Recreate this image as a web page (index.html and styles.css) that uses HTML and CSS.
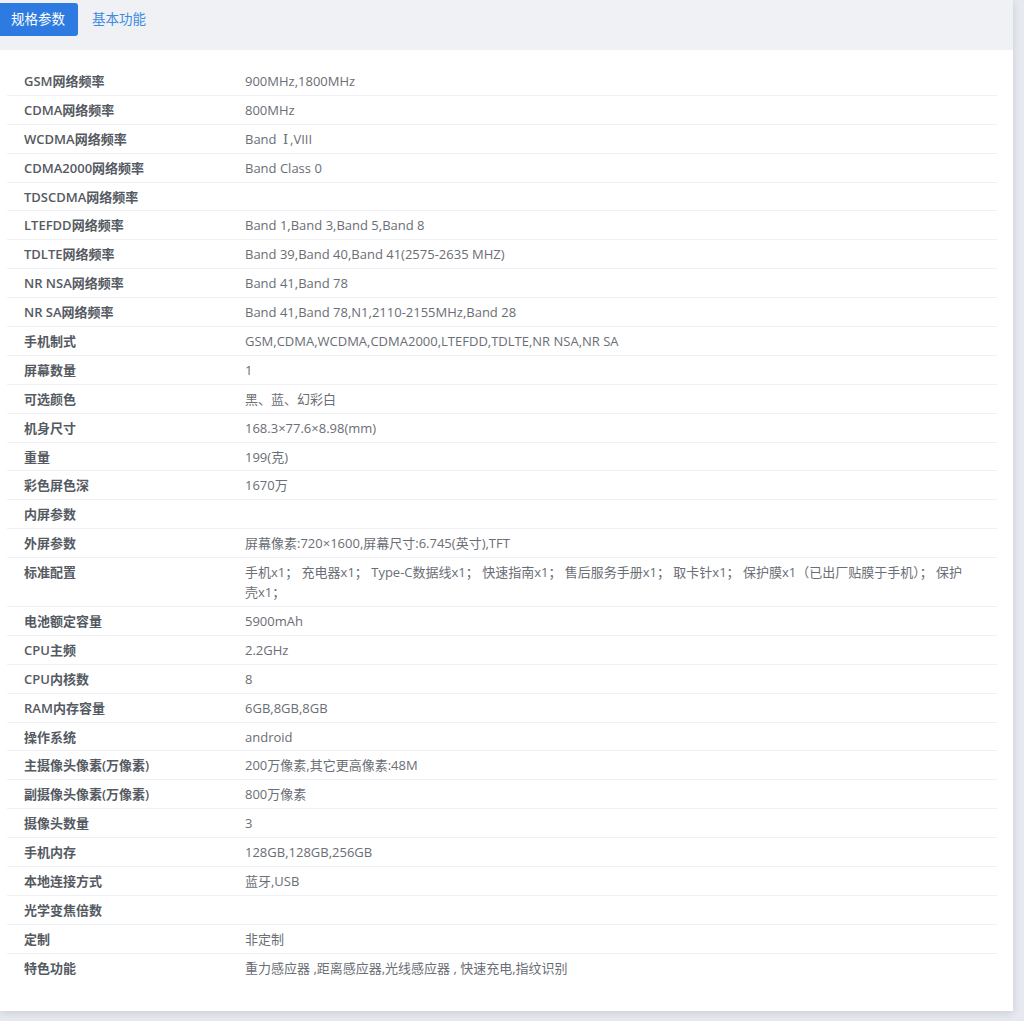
FILE: index.html
```html
<!DOCTYPE html>
<html lang="zh-CN">
<head>
<meta charset="utf-8">
<title>规格参数</title>
<link rel="stylesheet" href="styles.css">
</head>
<body>
<div class="card">
  <div class="tabs">
    <div class="tab active">规格参数</div>
    <div class="tab">基本功能</div>
  </div>
  <div class="content">
    <div class="spec">
      <div class="row"><div class="k">GSM网络频率</div><div class="v">900MHz,1800MHz</div></div>
      <div class="row"><div class="k">CDMA网络频率</div><div class="v">800MHz</div></div>
      <div class="row"><div class="k">WCDMA网络频率</div><div class="v">Band <span class="roman">Ⅰ</span>,VIII</div></div>
      <div class="row"><div class="k">CDMA2000网络频率</div><div class="v">Band Class 0</div></div>
      <div class="row"><div class="k">TDSCDMA网络频率</div><div class="v"></div></div>
      <div class="row"><div class="k">LTEFDD网络频率</div><div class="v">Band 1,Band 3,Band 5,Band 8</div></div>
      <div class="row"><div class="k">TDLTE网络频率</div><div class="v">Band 39,Band 40,Band 41(2575-2635 MHZ)</div></div>
      <div class="row"><div class="k">NR NSA网络频率</div><div class="v">Band 41,Band 78</div></div>
      <div class="row"><div class="k">NR SA网络频率</div><div class="v">Band 41,Band 78,N1,2110-2155MHz,Band 28</div></div>
      <div class="row"><div class="k">手机制式</div><div class="v">GSM,CDMA,WCDMA,CDMA2000,LTEFDD,TDLTE,NR NSA,NR SA</div></div>
      <div class="row"><div class="k">屏幕数量</div><div class="v">1</div></div>
      <div class="row"><div class="k">可选颜色</div><div class="v">黑、蓝、幻彩白</div></div>
      <div class="row"><div class="k">机身尺寸</div><div class="v">168.3×77.6×8.98(mm)</div></div>
      <div class="row"><div class="k">重量</div><div class="v">199(克)</div></div>
      <div class="row"><div class="k">彩色屏色深</div><div class="v">1670万</div></div>
      <div class="row"><div class="k">内屏参数</div><div class="v"></div></div>
      <div class="row"><div class="k">外屏参数</div><div class="v">屏幕像素:720×1600,屏幕尺寸:6.745(英寸),TFT</div></div>
      <div class="row"><div class="k">标准配置</div><div class="v">手机x1； 充电器x1； Type-C数据线x1； 快速指南x1； 售后服务手册x1； 取卡针x1； 保护膜x1（已出厂贴膜于手机）； 保护壳x1；</div></div>
      <div class="row"><div class="k">电池额定容量</div><div class="v">5900mAh</div></div>
      <div class="row"><div class="k">CPU主频</div><div class="v">2.2GHz</div></div>
      <div class="row"><div class="k">CPU内核数</div><div class="v">8</div></div>
      <div class="row"><div class="k">RAM内存容量</div><div class="v">6GB,8GB,8GB</div></div>
      <div class="row"><div class="k">操作系统</div><div class="v">android</div></div>
      <div class="row"><div class="k">主摄像头像素(万像素)</div><div class="v">200万像素,其它更高像素:48M</div></div>
      <div class="row"><div class="k">副摄像头像素(万像素)</div><div class="v">800万像素</div></div>
      <div class="row"><div class="k">摄像头数量</div><div class="v">3</div></div>
      <div class="row"><div class="k">手机内存</div><div class="v">128GB,128GB,256GB</div></div>
      <div class="row"><div class="k">本地连接方式</div><div class="v">蓝牙,USB</div></div>
      <div class="row"><div class="k">光学变焦倍数</div><div class="v"></div></div>
      <div class="row"><div class="k">定制</div><div class="v">非定制</div></div>
      <div class="row"><div class="k">特色功能</div><div class="v">重力感应器 ,距离感应器,光线感应器 , 快速充电,指纹识别</div></div>
    </div>
  </div>
</div>
</body>
</html>
```

FILE: styles.css
```css
html, body {
  margin: 0;
  padding: 0;
}
body {
  background: #e7e9f0;
  font-family: "Open Sans", "Noto Sans CJK SC", sans-serif;
  font-size: 13px;
  width: 1024px;
  height: 1021px;
  overflow: hidden;
}
.card {
  width: 1013px;
  background: #fff;
  box-shadow: 0 2px 8px rgba(0, 0, 0, 0.12);
}
.tabs {
  height: 50px;
  background: #f0f1f5;
  display: flex;
  align-items: flex-start;
  padding-top: 3px;
  box-sizing: border-box;
}
.tab {
  height: 33px;
  line-height: 33px;
  padding: 0 11px;
  font-size: 13.5px;
  color: #3b8be3;
  margin-left: 3px;
}
.tab.active {
  margin-left: 0;
  background: #2d7be0;
  color: #fff;
  border-radius: 0 3px 3px 0;
  width: 56px;
}
.content {
  padding: 17px 16px 29px 7px;
}
.spec {
  display: flex;
  flex-direction: column;
}
.row {
  display: grid;
  grid-template-columns: 238px 1fr;
  border-bottom: 1px solid #eef0f5;
}
.row:last-child {
  border-bottom: none;
}
.k, .v {
  line-height: 20px;
  height: auto;
  padding: 4px 0 3.9px;
}
.k {
  padding-left: 17px;
  font-weight: 600;
  color: #555a62;
}
.v {
  color: #6a6e75;
  padding-right: 30px;
}
.roman {
  font-family: "DejaVu Serif", "Liberation Serif", serif;
  line-height: 0;
  margin: 0 2px 0 3px;
}
```
